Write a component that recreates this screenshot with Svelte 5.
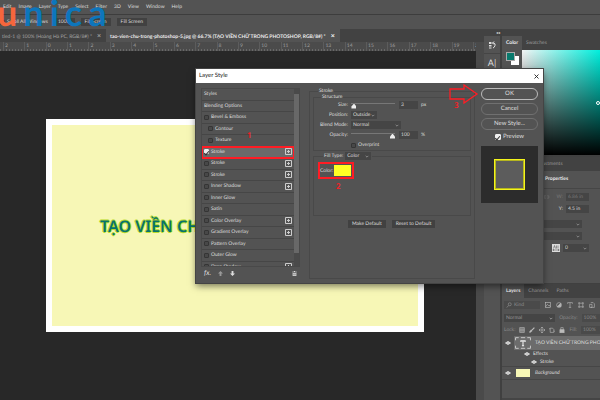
<script lang="ts">
const menus = ['Edit', 'Image', 'Layer', 'Type', 'Select', 'Filter', '3D', 'View', 'Window', 'Help'];
const rulerMarks = [2, 1, 0, ...Array.from({ length: 20 }, (_, i) => i + 1)];

let styles = $state([
    { name: 'Bevel & Emboss', on: false, sub: false, add: false },
    { name: 'Contour', on: false, sub: true, add: false },
    { name: 'Texture', on: false, sub: true, add: false },
    { name: 'Stroke', on: true, sub: false, add: true },
    { name: 'Stroke', on: false, sub: false, add: true },
    { name: 'Stroke', on: false, sub: false, add: true },
    { name: 'Inner Shadow', on: false, sub: false, add: true },
    { name: 'Inner Glow', on: false, sub: false, add: false },
    { name: 'Satin', on: false, sub: false, add: false },
    { name: 'Color Overlay', on: false, sub: false, add: true },
    { name: 'Gradient Overlay', on: false, sub: false, add: true },
    { name: 'Pattern Overlay', on: false, sub: false, add: false },
    { name: 'Outer Glow', on: false, sub: false, add: false },
    { name: 'Drop Shadow', on: false, sub: false, add: true }
]);
let selected = $state(3);

let size = $state(3);
let opacity = $state(100);
let overprint = $state(false);
let preview = $state(true);
let scrollAll = $state(false);
</script>

{#snippet dropdown(label: string, value: string, width: string)}
    <span class="dropdown {width}">
        <select aria-label={label}><option>{value}</option></select>
        <svg viewBox="0 0 6 4" aria-hidden="true"><path d="M1 1l2 2 2-2" /></svg>
    </span>
{/snippet}

{#snippet eye()}
    <svg class="eye" viewBox="0 0 12 8" aria-hidden="true">
        <path d="M1 4Q6-2 11 4Q6 10 1 4Z" fill="none" stroke="#eee" stroke-width="1.8" />
        <circle cx="6" cy="4" r="1.8" fill="#eee" />
    </svg>
{/snippet}

<div class="app">
    <nav class="menubar">
        {#each menus as menu}
            <button type="button">{menu}</button>
        {/each}
    </nav>

    <div class="options">
        <label class="check"><input type="checkbox" bind:checked={scrollAll} />Scroll All Windows</label>
        <button type="button">100%</button>
        <button type="button">Fit Screen</button>
        <button type="button">Fill Screen</button>
    </div>

    <div class="logo"><span class="first">u</span><span>n</span><span>i</span><span>c</span><span>a</span></div>

    <div class="body">
        <main class="document">
            <div class="doc-tabs">
                <div class="doc-tab">tled-1 @ 100% (Hoàng Hà PC, RGB/8#) *<b>×</b></div>
                <div class="doc-tab active">tao-vien-chu-trong-photoshop-5.jpg @ 66.7% (TẠO VIỀN CHỮ TRONG PHOTOSHOP, RGB/8#) *<b>×</b></div>
            </div>
            <div class="view">
                <div class="sheet">
                    <div class="ruler">
                        {#each rulerMarks as mark}
                            <span>{mark}</span>
                        {/each}
                    </div>
                    <div class="canvas">
                        <div class="artboard"><h1>TẠO VIỀN CHỮ TRONG PHOTOSHOP</h1></div>
                    </div>
                </div>
                <div class="vscroll"></div>
            </div>
        </main>

        <aside class="dock">
            <div class="collapse">◂◂</div>
            <button type="button" aria-label="History">
                <svg viewBox="0 0 16 16"><path d="M2 2h5v4H2zM2 8h5v3H2zM2 13h5v2H2z" fill="#ddd" /><path d="M9 4h3q3 1 2 5t-4 5M12 1L9 4l3 3" fill="none" stroke="#ddd" stroke-width="2" /></svg>
            </button>
            <button type="button" aria-label="Character" class="char">A|</button>
        </aside>

        <aside class="panels">
            <section class="color-panel">
                <div class="tabs"><button type="button" class="on">Color</button><button type="button">Swatches</button></div>
                <div class="color-body">
                    <div class="swatches"><i class="back"></i><i class="front"></i></div>
                    <div class="field"><i></i></div>
                </div>
            </section>

            <section class="props-panel">
                <div class="tabs adjust"><button type="button">Adjustments</button></div>
                <h2>Properties</h2>
                <div class="props">
                    <div class="prop dim">
                        <svg viewBox="0 0 12 6" class="link"><path d="M5 1H2v4h3M7 1h3v4H7" fill="none" stroke="#777" /></svg>
                        <label for="pw">W:</label><input id="pw" value="6.86 in" disabled />
                    </div>
                    <div class="prop"><label for="py">Y:</label><input id="py" value="4.5 in" /></div>
                    <div class="fonts">
                        {@render dropdown('Font family', '', 'wide')}
                        {@render dropdown('Font style', '', 'wide')}
                    </div>
                    <div class="prop">
                        <svg viewBox="0 0 16 16" class="leading"><rect width="16" height="16" fill="#ddd" /><path d="M3 9L5 3l2 6M9 3v6M12 3v6M1 12h14M4 10l-2 2 2 2M12 10l2 2-2 2" fill="none" stroke="#444" /></svg>
                        {@render dropdown('Leading', '0', 'short')}
                    </div>
                </div>
            </section>

            <section class="layers-panel">
                <div class="tabs">
                    <button type="button" class="on">Layers</button><button type="button">Channels</button><button type="button">Paths</button>
                </div>
                <div class="tools">
                    <label class="kind"><svg viewBox="0 0 8 8"><circle cx="5" cy="3" r="2" /><path d="M3.500 4.500L1 7.500" /></svg><input aria-label="Filter kind" value="Kind" /></label>
                    <svg viewBox="0 0 10 10"><rect x="1" y="1" width="8" height="8" /><path d="M1 8l3-4 2 2 1-1 2 3" /></svg>
                    <svg viewBox="0 0 10 10"><circle cx="5" cy="5" r="4" /><path d="M8 2v6H2z" fill="#bbb" /></svg>
                    <svg viewBox="0 0 10 10"><path d="M1 3V1h8v2M5 1v8M3 9h4" /></svg>
                    <svg viewBox="0 0 10 10"><path d="M2 2h6v6H2zM0 2h2V0M8 0v2h2M0 8h2v2M8 10V8h2" /></svg>
                    <svg viewBox="0 0 10 10"><path d="M3 1h4l2 2v6H3M1 4h4v5H1z" /></svg>
                </div>
                <div class="tools blend">
                    {@render dropdown('Layer blend mode', 'Normal', 'blendw')}
                    <label for="lo">Opacity:</label><input id="lo" value="100%" />
                </div>
                <div class="tools lock">
                    <span>Lock:</span>
                    <svg viewBox="0 0 10 10"><path d="M1 1h8v8H1zM1 5h8M5 1v8M3 1v8M7 1v8" /></svg>
                    <svg viewBox="0 0 10 10"><path d="M9 1L4 6M4 5L1 9l4-3" stroke-width="2" /></svg>
                    <svg viewBox="0 0 10 10"><path d="M5 0v10M0 5h10M3 2l2-2 2 2M3 8l2 2 2-2M2 3L0 5l2 2M8 3l2 2-2 2" /></svg>
                    <svg viewBox="0 0 10 10"><path d="M2 2h4l2 2v5H2zM0 3h2M8 7h2" /></svg>
                    <svg viewBox="0 0 10 10"><path d="M3 5V1h4v4" /><rect x="1.500" y="4.500" width="7" height="5" fill="#bbb" /></svg>
                    <label for="lf">Fill:</label><input id="lf" value="100%" />
                </div>
                <div class="layer current">
                    {@render eye()}
                    <svg class="thumb" viewBox="0 0 30 22"><path d="M1 6V1h6M11 1h8M23 1h6v5M29 16v5h-6M19 21h-8M7 21H1v-5" fill="none" stroke="#ddd" stroke-width="1.500" /><path d="M11 9V7h8v2M15 7v9M13 16h4" fill="none" stroke="#eee" stroke-width="2" /></svg>
                    <span>TẠO VIỀN CHỮ TRONG PHOTOSHOP</span>
                </div>
                <div class="effects">
                    <div>{@render eye()}Effects</div>
                    <div class="deep">{@render eye()}Stroke</div>
                </div>
                <div class="layer bg">{@render eye()}<i class="paper"></i><em>Background</em></div>
                <div class="footer"></div>
            </section>
        </aside>
    </div>

    <div class="dialog" role="dialog" aria-label="Layer Style">
        <header>
            <span>Layer Style</span>
            <button type="button" aria-label="Close"><svg viewBox="0 0 10 10"><path d="M1 1l8 8M9 1L1 9" stroke="#222" stroke-width="1.800" /></svg></button>
        </header>
        <div class="dialog-body">
            <div class="style-col">
                <div class="style-view">
                    <ul>
                        <li>Styles</li>
                        <li>Blending Options</li>
                        {#each styles as style, i}
                            <li class:selected={i === selected}>
                                <label class="check" class:sub={style.sub}><input type="checkbox" bind:checked={style.on} onchange={() => (selected = i)} />{style.name}</label>
                                {#if style.add}
                                    <button type="button" aria-label="Add {style.name}"><svg viewBox="0 0 7 7"><path d="M.5 .5h6v6h-6zM3.500 2v3M2 3.500h3" fill="none" stroke="#ccc" /></svg></button>
                                {/if}
                            </li>
                        {/each}
                    </ul>
                    <div class="scrollbar"><i></i></div>
                </div>
                <div class="style-tools">
                    <em>fx.</em>
                    <svg viewBox="0 0 8 8" class="off"><path d="M4 0l4 4H5.500v4h-3V4H0z" /></svg>
                    <svg viewBox="0 0 8 8"><path d="M4 8l4-4H5.500V0h-3v4H0z" /></svg>
                    <svg viewBox="0 0 8 8" class="trash"><path d="M0 1h3V0h2v1h3v1H0zM1 3h6v5H1z" /><path d="M3 4v3M5 4v3" stroke="#555" /></svg>
                </div>
            </div>

            <fieldset class="settings">
                <legend>Stroke</legend>
                <fieldset class="structure">
                    <legend>Structure</legend>
                    <div class="row">
                        <label for="size">Size:</label>
                        <input id="size" type="range" min="0" max="250" bind:value={size} />
                        <input class="num" aria-label="Size in pixels" bind:value={size} /><span>px</span>
                    </div>
                    <div class="row"><span class="cap">Position:</span>{@render dropdown('Position', 'Outside', 'short')}</div>
                    <div class="row"><span class="cap">Blend Mode:</span>{@render dropdown('Blend Mode', 'Normal', 'long')}</div>
                    <div class="row">
                        <label for="opacity">Opacity:</label>
                        <input id="opacity" type="range" min="0" max="100" bind:value={opacity} />
                        <input class="num" aria-label="Opacity in percent" bind:value={opacity} /><span>%</span>
                    </div>
                    <div class="row over"><label class="check"><input type="checkbox" bind:checked={overprint} />Overprint</label></div>
                </fieldset>
                <fieldset class="fill">
                    <legend>Fill Type: {@render dropdown('Fill Type', 'Color', 'short')}</legend>
                    <div class="color-row">
                        <span>Color:</span><button type="button" aria-label="Stroke color"></button>
                    </div>
                </fieldset>
                <div class="defaults">
                    <button type="button">Make Default</button>
                    <button type="button">Reset to Default</button>
                </div>
            </fieldset>

            <div class="actions">
                <button type="button" class="ok">OK</button>
                <button type="button">Cancel</button>
                <button type="button">New Style...</button>
                <label class="check"><input type="checkbox" bind:checked={preview} />Preview</label>
                <div class="preview"><i></i></div>
            </div>
        </div>

        <span class="note one">1</span>
        <span class="note two">2</span>
        <span class="note three">3</span>
        <svg class="arrow" viewBox="0 0 30 20"><path d="M1 5h14V1l13 9-13 9v-4H1z" fill="none" stroke="#ff1c24" stroke-width="1.300" /></svg>
    </div>
</div>

<style>
:global(body) {
    margin: 0;
    background: #282828;
}

.app,
.app * {
    box-sizing: border-box;
}

.app {
    position: relative;
    display: flex;
    flex-direction: column;
    min-height: 100vh;
    overflow: hidden;
    background: #535353;
    color: #ddd;
    font-family: Lato, "Noto Sans", sans-serif;
    font-size: 5px;
    line-height: 8px;
    text-rendering: geometricPrecision;
    white-space: nowrap;
}

button,
input,
select {
    margin: 0;
    padding: 0;
    border: 0;
    border-radius: 0;
    background: none;
    color: inherit;
    font: inherit;
    min-width: 0;
    text-rendering: inherit;
}

svg,
i {
    display: block;
    flex: none;
}

.check {
    display: flex;
    align-items: center;
    gap: 2px;
}

input[type='checkbox'] {
    appearance: none;
    display: grid;
    place-items: center;
    width: 5px;
    height: 5px;
    border: 1px solid #353535;
    background: #484848;
    border-radius: 1px;
}

input[type='checkbox']:checked {
    background: #eee;
    border-color: #eee;
}

input[type='checkbox']:checked::after {
    content: '';
    width: 2px;
    height: 4px;
    border: solid #333;
    border-width: 0 1px 1px 0;
    transform: rotate(40deg);
}

.menubar {
    display: flex;
    gap: 7px;
    height: 15px;
    padding-left: 3px;
    border-bottom: 1px solid #3d3d3d;
}

.options {
    display: flex;
    align-items: center;
    gap: 6px;
    height: 14px;
}

.options button,
.defaults button {
    height: 8px;
    padding: 0 4px;
    background: #414141;
    line-height: 8px;
}

.logo {
    position: absolute;
    top: -6px;
    left: -3px;
    display: flex;
    gap: 6px;
    color: #0d76bc;
    font-size: 36px;
    font-weight: 700;
    line-height: 36px;
}

.logo .first {
    color: #f5663c;
}

.body {
    display: flex;
    flex: 1;
}

.document {
    display: flex;
    flex-direction: column;
    flex: 1;
    min-width: 0;
}

.doc-tabs {
    display: flex;
    height: 13px;
    background: #424242;
    color: #a5a5a5;
    line-height: 14px;
}

.doc-tab {
    padding: 0 5px 0 4px;
}

.doc-tab:first-child {
    padding-left: 2px;
}

.doc-tab b {
    margin-left: 5px;
    font-size: 7px;
}

.doc-tab.active {
    background: #535353;
    color: #eee;
    font-weight: bold;
}

.view,
.sheet {
    display: flex;
    flex: 1;
    min-width: 0;
}

.sheet {
    flex-direction: column;
}

.ruler {
    display: grid;
    grid-auto-flow: column;
    grid-auto-columns: calc(100% / 22);
    height: 9px;
    padding: 0 3px;
    overflow: hidden;
    background: repeating-linear-gradient(90deg, #686868 0 1px, transparent 1px 3px) bottom / 100% 2px no-repeat #4b4b4b;
    color: #a0a0a0;
}

.ruler span {
    border-left: 1px solid #5c5c5c;
    padding-left: 1px;
}

.canvas {
    display: flex;
    flex: 1;
    align-items: center;
    padding: 0 52px 0 46px;
    background: #282828;
}

.artboard {
    display: flex;
    align-items: center;
    flex: 1;
    min-width: 0;
    height: 213px;
    padding-left: 48px;
    overflow: hidden;
    border: 6px solid #fff;
    background: #f7f7b6;
}

h1 {
    margin: 0;
    color: #08736b;
    font-family: "Noto Sans", sans-serif;
    font-size: 16px;
    font-weight: 600;
    line-height: 24px;
    text-shadow: 1px 0 #b9dc2b, -1px 0 #b9dc2b, 0 1px #b9dc2b, 0 -1px #b9dc2b;
}

.vscroll {
    width: 8px;
    background: #4a4a4a;
}

.dock {
    width: 18px;
    border-right: 2px solid #404040;
}

.collapse {
    height: 7px;
    background: #424242;
    font-size: 4px;
    text-align: right;
}

.dock button {
    display: grid;
    place-items: center;
    width: 100%;
    height: 18px;
    border-bottom: 1px solid #454545;
}

.dock svg {
    width: 8px;
    height: 8px;
}

.dock .char {
    font-size: 9px;
}

.panels {
    display: flex;
    flex-direction: column;
    width: 98px;
    background: #535353;
}

.color-panel {
    padding-top: 7px;
    background: #424242;
}

.tabs {
    display: flex;
    height: 14px;
    background: #424242;
    color: #999;
}

.tabs button {
    padding: 0 4px;
}

.tabs .on {
    background: #535353;
    color: #eee;
    font-weight: bold;
}

.color-body {
    display: flex;
    height: 105px;
    background: #535353;
}

.swatches {
    display: grid;
    grid-template-columns: 5px 4px 4px;
    grid-template-rows: 4px 5px 4px;
    width: 20px;
    padding: 2px 0 0 4px;
}

.swatches .back {
    grid-area: 2 / 2 / 4 / 4;
    background: #fff;
}

.swatches .front {
    grid-area: 1 / 1 / 3 / 3;
    border: 1px solid #aaa;
    background: #08796c;
}

.field {
    display: flex;
    justify-content: flex-end;
    align-items: center;
    flex: 1;
    overflow: hidden;
    background: linear-gradient(transparent, #000), linear-gradient(90deg, #f4f4f4, #00efdd);
}

.field i {
    width: 4px;
    height: 4px;
    border: 1px solid #fff;
    border-radius: 50%;
}

.props-panel {
    border-top: 2px solid #404040;
}

.tabs.adjust {
    padding-left: 29px;
}

h2 {
    margin: 0;
    padding-left: 43px;
    border-bottom: 1px solid #464646;
    font-size: 5px;
    line-height: 17px;
    color: #eee;
}

.props {
    display: flex;
    flex-direction: column;
    gap: 4px;
    height: 94px;
    padding: 4px 11px 0 40px;
}

.fonts {
    display: flex;
    flex-direction: column;
    gap: 4px;
    padding-top: 3px;
}

.props-panel .props input {
    width: 23px;
    height: 8px;
    padding-left: 2px;
    background: #454545;
}

.prop {
    display: flex;
    align-items: center;
    justify-content: flex-end;
    gap: 3px;
}

.dim {
    color: #777;
}

.link {
    width: 7px;
    height: 4px;
    margin-right: 4px;
}

.leading {
    width: 8px;
    height: 8px;
}

.dropdown {
    display: inline-flex;
    align-items: center;
    height: 8px;
    padding-right: 2px;
    background: #454545;
}

.dropdown select {
    appearance: none;
    flex: 1;
    height: 8px;
    padding-left: 2px;
    line-height: 8px;
}

.dropdown svg {
    width: 4px;
    height: 3px;
    fill: none;
    stroke: #aaa;
}

.wide {
    width: 40px;
}

.short {
    width: 26px;
}

.long {
    width: 50px;
}

.blendw {
    width: 56px;
    color: #999;
}

.layers-panel {
    display: flex;
    flex-direction: column;
    flex: 1;
    border-top: 1px solid #404040;
}

.tools {
    display: flex;
    align-items: center;
    gap: 5px;
    height: 14px;
    padding-left: 2px;
    color: #8a8a8a;
}

.tools svg {
    width: 6px;
    height: 6px;
    fill: none;
    stroke: #bbb;
}

.tools.blend,
.tools.lock {
    gap: 4px;
    height: 12px;
}

.tools input {
    width: 20px;
    height: 8px;
    padding-left: 2px;
    background: #4a4a4a;
}

.kind {
    display: flex;
    align-items: center;
    gap: 2px;
    width: 36px;
    height: 8px;
    padding-left: 2px;
    background: #4a4a4a;
}

.kind input {
    flex: 1;
    padding: 0;
}

.kind svg {
    stroke: #888;
}

.tools .dropdown svg {
    width: 4px;
    height: 3px;
}

.layer {
    display: flex;
    align-items: center;
    gap: 4px;
    height: 14px;
    padding-left: 3px;
    overflow: hidden;
}

.eye {
    width: 6px;
    height: 4px;
}

.current {
    background: linear-gradient(90deg, #535353 12px, #6c6c6c 12px);
}

.thumb {
    width: 16px;
    height: 12px;
}

.effects {
    padding-left: 22px;
}

.effects div {
    display: flex;
    align-items: center;
    gap: 3px;
    height: 8px;
}

.effects .deep {
    padding-left: 7px;
}

.bg {
    border-block: 1px solid #464646;
}

.paper {
    width: 14px;
    height: 8px;
    margin: 0 1px;
    background: #f7f7b6;
}

.footer {
    height: 2px;
    margin-top: auto;
    background: #454545;
}

.dialog {
    position: absolute;
    top: 69px;
    left: 196px;
    width: 347px;
    background: #535353;
    box-shadow: 0 0 0 1px #444, 0 3px 7px #0008;
}

.dialog header {
    display: flex;
    align-items: center;
    justify-content: space-between;
    height: 14px;
    padding: 0 4px 0 3px;
    background: #fff;
    color: #222;
    font-size: 6px;
}

.dialog header svg {
    width: 5px;
    height: 5px;
}

.dialog-body {
    display: flex;
    height: 200px;
    padding: 5px 5px 4px;
}

.style-col {
    width: 99px;
}

.style-view {
    display: flex;
    height: 179px;
    overflow: hidden;
    border: 1px solid #494949;
}

ul {
    display: grid;
    grid-template-rows: repeat(16, 1fr);
    flex: 1;
    height: 184px;
    margin: 0;
    padding: 0;
    list-style: none;
}

li {
    display: flex;
    align-items: center;
    justify-content: space-between;
    padding: 0 2px;
    border-bottom: 1px solid #464646;
}

li button,
li button svg {
    display: block;
    width: 7px;
    height: 7px;
}

li .sub {
    padding-left: 4px;
}

li.selected {
    background: #6a6a6a;
    outline: 2px solid #ff1c24;
    outline-offset: -1px;
}

.scrollbar {
    width: 5px;
    padding: 5px 0;
    background: #4a4a4a;
}

.scrollbar i {
    height: 159px;
    background: #686868;
}

.style-tools {
    display: flex;
    align-items: center;
    gap: 7px;
    height: 12px;
    padding: 0 3px;
    font-size: 7px;
}

.style-tools svg {
    width: 5px;
    height: 5px;
    fill: #ddd;
}

.style-tools .off {
    fill: #999;
}

.style-tools .trash {
    margin-left: auto;
}

fieldset {
    min-width: 0;
    margin: 0;
    padding: 0;
    border: 1px solid #494949;
}

legend {
    padding: 0 1px;
    line-height: 6px;
}

.settings {
    width: 166px;
    height: 191px;
    margin-left: 9px;
    padding: 0 3px;
}

.settings > legend {
    margin-left: 5px;
}

.structure {
    height: 57px;
}

.structure legend {
    margin-left: 7px;
}

.row {
    display: flex;
    align-items: center;
    gap: 3px;
    height: 10px;
}

.row > label:first-child,
.cap {
    width: 34px;
    text-align: right;
}

.row .num {
    width: 19px;
    height: 8px;
    margin-left: 1px;
    padding-left: 2px;
    background: #454545;
}

.row.over .check {
    width: auto;
    padding-left: 37px;
}

input[type='range'] {
    appearance: none;
    width: 44px;
    height: 8px;
    background: linear-gradient(#777, #777) 0 2px / 100% 1px no-repeat;
}

input[type='range']::-webkit-slider-thumb {
    appearance: none;
    width: 5px;
    height: 5px;
    margin-top: 2px;
    background: #eee;
    clip-path: polygon(50% 0, 100% 60%, 100% 100%, 0 100%, 0 60%);
}

.fill {
    height: 64px;
    margin-top: 1px;
}

.fill legend {
    display: flex;
    align-items: center;
    gap: 2px;
    margin-left: 9px;
}

.color-row {
    display: flex;
    align-items: center;
    justify-content: space-between;
    width: 36px;
    height: 17px;
    margin: 2px 0 0 4px;
    padding-right: 1px;
    border: 2px solid #ff1c24;
}

.color-row button {
    width: 17px;
    height: 11px;
    background: #ffff24;
}

.defaults {
    display: flex;
    gap: 6px;
    padding: 4px 0 0 35px;
}

.actions {
    display: flex;
    flex-direction: column;
    gap: 3px;
    flex: 1;
    margin-left: 6px;
    font-size: 6px;
}

.actions button {
    height: 12px;
    border: 1px solid #707070;
    border-radius: 6px;
    line-height: 10px;
}

.actions .ok {
    border-color: #bbb;
}

.actions .check {
    justify-content: center;
    height: 8px;
}

.actions .check input {
    width: 6px;
    height: 6px;
}

.preview {
    display: grid;
    place-items: center;
    height: 57px;
    margin-top: 2px;
    background: #2c2c2c;
}

.preview i {
    width: 31px;
    height: 31px;
    border: 1px solid #f4f41c;
    outline: 1px solid #b5b520;
    outline-offset: -2px;
    background: #5c5c5c;
}

.note {
    position: absolute;
    color: #ff1c24;
    font-family: "Noto Sans", sans-serif;
    font-size: 8px;
    font-weight: 600;
}

.one {
    top: 63px;
    left: 51px;
}

.two {
    top: 114px;
    left: 140px;
}

.three {
    top: 33px;
    left: 258px;
}

.arrow {
    position: absolute;
    top: 15px;
    left: 253px;
    width: 30px;
    height: 20px;
}
</style>
